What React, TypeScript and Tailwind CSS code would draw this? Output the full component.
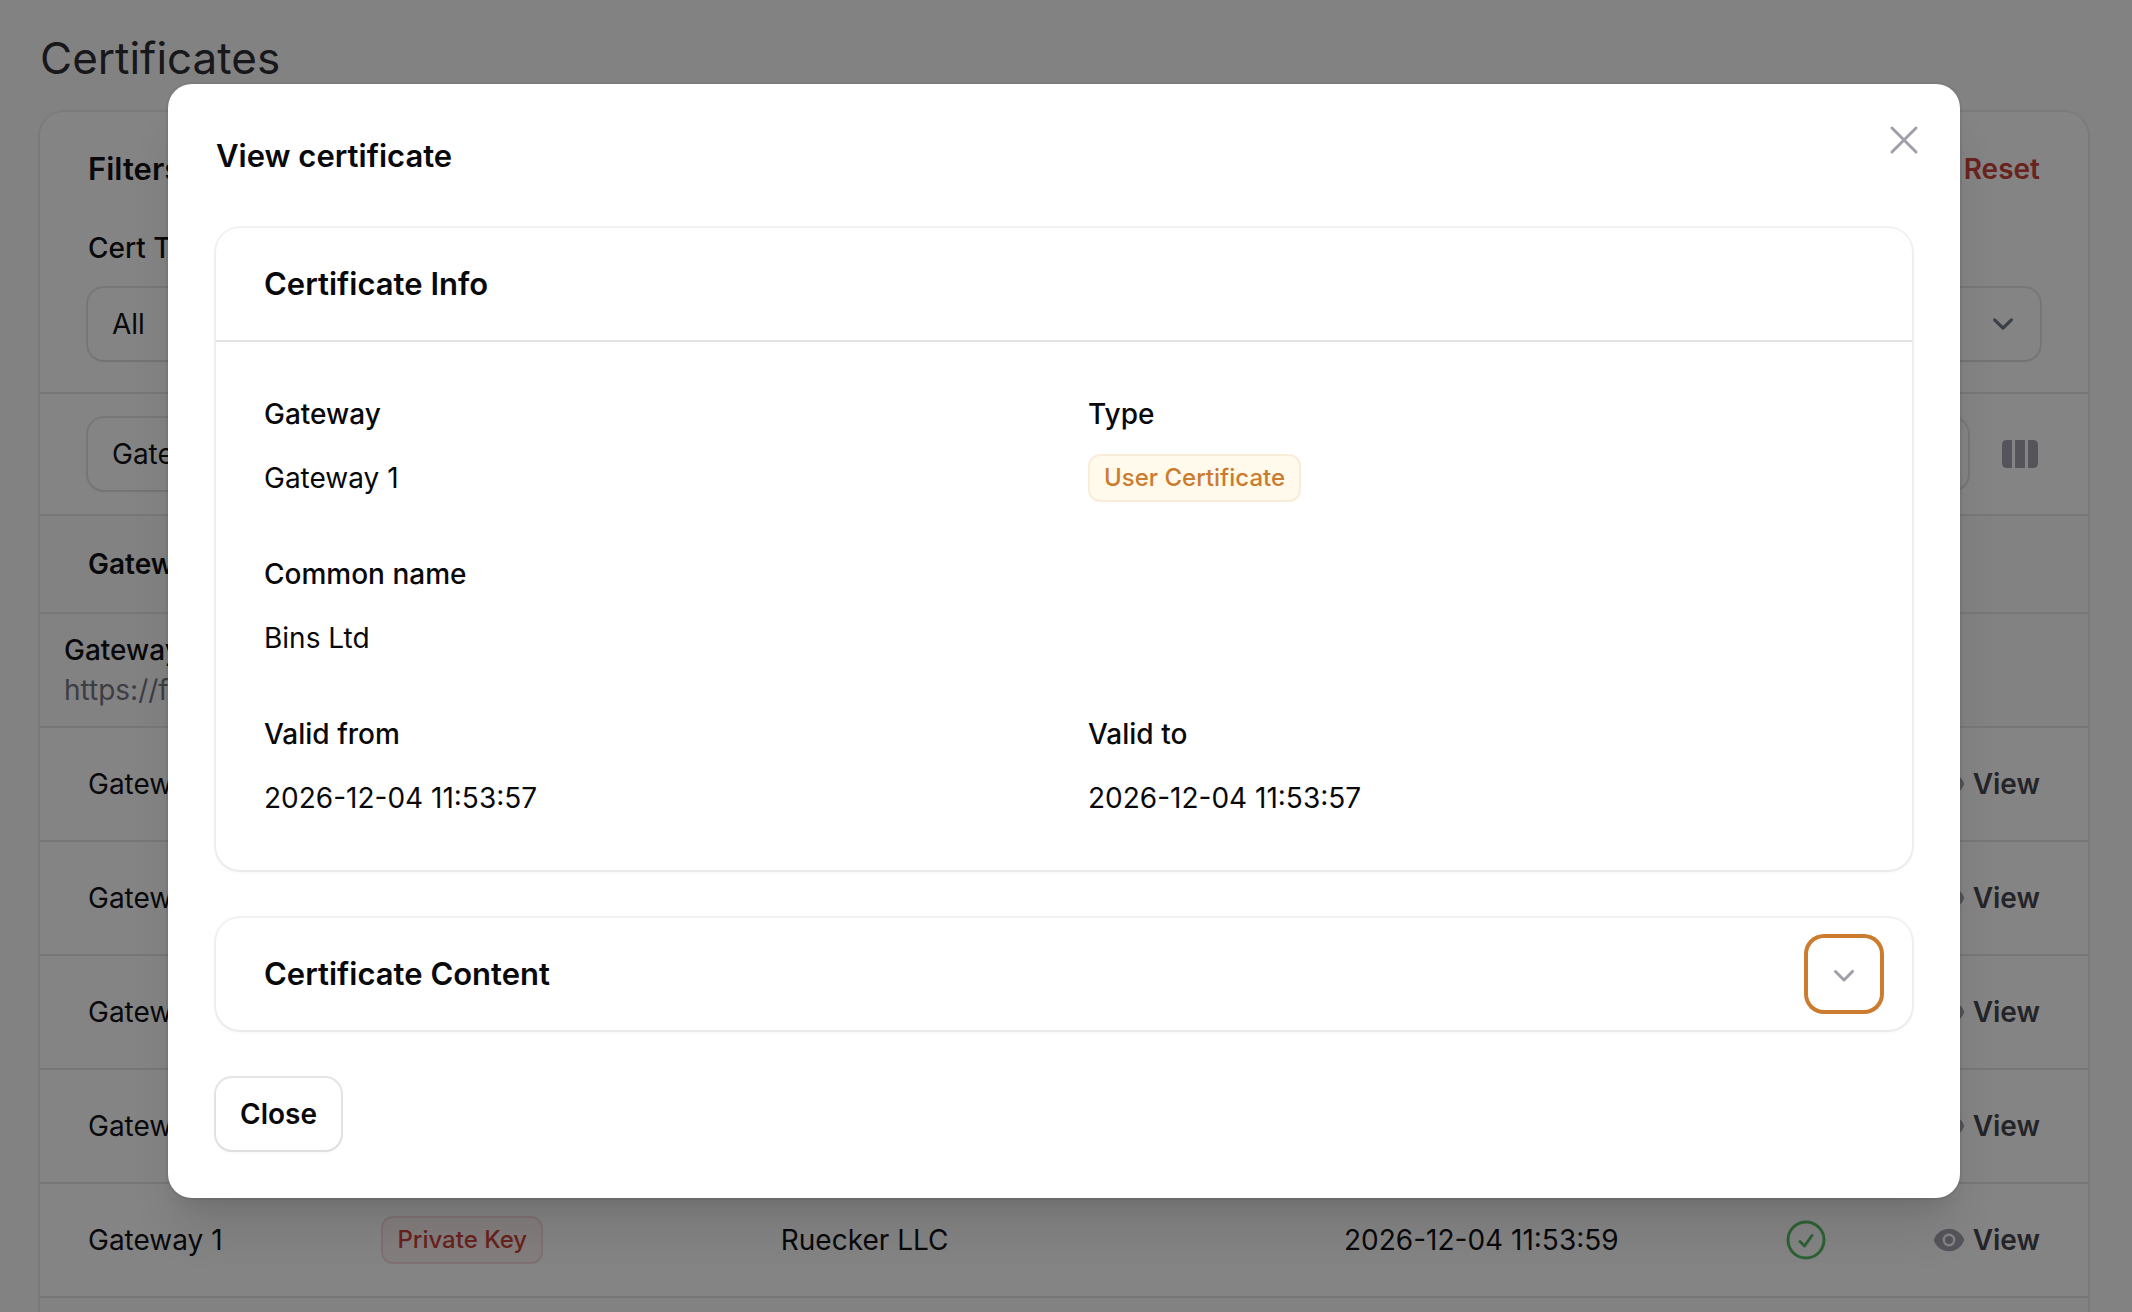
import type { ReactNode } from "react";

type Row = { type: string; name: string; validTo: string };

const rows: Row[] = [
  { type: "User Certificate", name: "Bins Ltd", validTo: "2026-12-04 11:53:57" },
  { type: "User Certificate", name: "Bins Ltd", validTo: "2026-12-04 11:53:57" },
  { type: "Private Key", name: "Ruecker LLC", validTo: "2026-12-04 11:53:59" },
  { type: "Private Key", name: "Ruecker LLC", validTo: "2026-12-04 11:53:59" },
  { type: "Private Key", name: "Ruecker LLC", validTo: "2026-12-04 11:53:59" },
];

function ChevronDown({ className }: { className: string }) {
  return (
    <svg viewBox="0 0 20 20" fill="currentColor" className={className} aria-hidden="true">
      <path
        fillRule="evenodd"
        clipRule="evenodd"
        d="M5.22 8.22a.75.75 0 0 1 1.06 0L10 11.94l3.72-3.72a.75.75 0 1 1 1.06 1.06l-4.25 4.25a.75.75 0 0 1-1.06 0L5.22 9.28a.75.75 0 0 1 0-1.06Z"
      />
    </svg>
  );
}

function SelectChevron() {
  return (
    <svg
      viewBox="0 0 20 20"
      fill="none"
      stroke="#6b7280"
      strokeWidth="1.5"
      strokeLinecap="round"
      strokeLinejoin="round"
      className="pointer-events-none absolute right-4 size-[42px]"
      aria-hidden="true"
    >
      <path d="m6 8 4 4 4-4" />
    </svg>
  );
}

function EyeIcon() {
  return (
    <svg viewBox="0 0 20 20" fill="currentColor" className="size-8 text-zinc-400" aria-hidden="true">
      <path d="M10 12.5a2.5 2.5 0 1 0 0-5 2.5 2.5 0 0 0 0 5Z" />
      <path
        fillRule="evenodd"
        clipRule="evenodd"
        d="M.664 10.59a1.651 1.651 0 0 1 0-1.186A10.004 10.004 0 0 1 10 3c4.257 0 7.893 2.66 9.336 6.41.147.381.146.804 0 1.186A10.004 10.004 0 0 1 10 17c-4.257 0-7.893-2.66-9.336-6.41ZM14 10a4 4 0 1 1-8 0 4 4 0 0 1 8 0Z"
      />
    </svg>
  );
}

function CheckCircle() {
  return (
    <svg
      viewBox="0 0 24 24"
      fill="none"
      stroke="#50ba5c"
      strokeWidth="1.5"
      strokeLinecap="round"
      strokeLinejoin="round"
      className="size-12"
      role="img"
      aria-label="Valid"
    >
      <path d="M9 12.75 11.25 15 15 9.75M21 12a9 9 0 1 1-18 0 9 9 0 0 1 18 0Z" />
    </svg>
  );
}

function Badge({ tone, children }: { tone: "amber" | "red"; children: ReactNode }) {
  const colors =
    tone === "amber"
      ? "border-[#f9ecd9] bg-[#fffaeb] text-[#cb7c2f]"
      : "border-[#f5d9d7] bg-[#fcf3ef] text-[#cb3a31]";
  return (
    <span
      className={`inline-flex h-12 items-center rounded-xl border-2 px-[14px] text-2xl font-medium ${colors}`}
    >
      {children}
    </span>
  );
}

function SelectBox({ id, value, label }: { id: string; value: string; label?: string }) {
  return (
    <div className="relative flex flex-1 items-center rounded-2xl bg-white shadow-[0_2px_4px_rgba(0,0,0,0.05)] ring-2 ring-zinc-950/10">
      <select
        id={id}
        aria-label={label}
        className="h-[72px] w-full appearance-none bg-transparent px-6 text-[28px] text-zinc-950 outline-none"
      >
        <option>{value}</option>
      </select>
      <SelectChevron />
    </div>
  );
}

function Entry({ label, children }: { label: string; children?: ReactNode }) {
  return (
    <div className="flex flex-col gap-4">
      <dt className="leading-[48px] font-medium">{label}</dt>
      <dd className="flex h-12 items-center">{children}</dd>
    </div>
  );
}

function CertificatesPage() {
  return (
    <main className="pt-6 pr-11 pl-10">
      <h1 className="text-[44px] leading-[68px] text-[#27272a]">Certificates</h1>
      <section className="mt-5 overflow-hidden rounded-3xl bg-white shadow-[0_2px_4px_rgba(0,0,0,0.05)] ring-2 ring-zinc-950/5">
        <div className="flex flex-col gap-8 border-b-2 border-zinc-200 px-12 py-8">
          <div className="flex items-center justify-between">
            <h2 className="text-[31px] leading-[50px] font-semibold">Filters</h2>
            <button type="button" className="leading-[50px] font-semibold text-[#cb3a31]">
              Reset
            </button>
          </div>
          <div className="-mt-0.5 flex flex-col gap-4">
            <label htmlFor="cert-type" className="leading-[48px] font-medium">
              Cert Type
            </label>
            <SelectBox id="cert-type" value="All" />
          </div>
        </div>
        <div className="flex items-center gap-8 border-b-2 border-zinc-200 px-12 py-6">
          <SelectBox id="group-by" value="Gateway" label="Group by" />
          <button type="button" aria-label="Toggle columns" className="text-zinc-400">
            <svg viewBox="0 0 20 20" fill="currentColor" className="size-10" aria-hidden="true">
              <path d="M14 17h2.75A2.25 2.25 0 0 0 19 14.75v-9.5A2.25 2.25 0 0 0 16.75 3H14v14ZM12.5 3h-5v14h5V3ZM3.25 3H6v14H3.25A2.25 2.25 0 0 1 1 14.75v-9.5A2.25 2.25 0 0 1 3.25 3Z" />
            </svg>
          </button>
        </div>
        <table className="w-full table-fixed border-separate border-spacing-0 text-left">
          <colgroup>
            <col className="w-[15.5%]" />
            <col className="w-[19.5%]" />
            <col className="w-[27.5%]" />
            <col className="w-[21.4%]" />
            <col className="w-[5%]" />
            <col />
          </colgroup>
          <thead>
            <tr className="h-[98px] bg-zinc-50 *:border-b-2 *:border-zinc-200">
              <th className="pr-6 pl-12 font-semibold">Gateway</th>
              <th className="px-6 font-semibold">Type</th>
              <th className="px-6 font-semibold">Common name</th>
              <th className="px-6 font-semibold">Valid to</th>
              <th className="px-6" />
              <th className="px-6" />
            </tr>
          </thead>
          <tbody>
            <tr className="h-[114px] bg-zinc-50 *:border-b-2 *:border-zinc-200">
              <th scope="rowgroup" colSpan={6} className="px-6 font-medium">
                <div>Gateway 1</div>
                <div className="font-normal text-zinc-500">https://fadel.example.com</div>
              </th>
            </tr>
            {rows.map((row, index) => (
              <tr key={index} className="h-[114px] *:border-b-2 *:border-zinc-200">
                <td className="pr-6 pl-12">Gateway 1</td>
                <td className="px-6">
                  <div className="flex">
                    <Badge tone={row.type === "Private Key" ? "red" : "amber"}>{row.type}</Badge>
                  </div>
                </td>
                <td className="px-6">{row.name}</td>
                <td className="px-6">{row.validTo}</td>
                <td className="pl-6">
                  <CheckCircle />
                </td>
                <td className="pr-12 pl-6">
                  <a href="#view" className="flex items-center justify-end gap-2 font-semibold text-zinc-700">
                    <EyeIcon />
                    View
                  </a>
                </td>
              </tr>
            ))}
            <tr className="h-[114px] bg-zinc-50">
              <td colSpan={6} />
            </tr>
          </tbody>
        </table>
      </section>
    </main>
  );
}

const cardClass =
  "rounded-3xl bg-white shadow-[0_2px_4px_rgba(0,0,0,0.05)] ring-2 ring-zinc-950/5";

function CertificateDialog() {
  return (
    <div
      role="dialog"
      aria-modal="true"
      aria-labelledby="dialog-title"
      className="relative flex w-full max-w-[1792px] flex-col gap-12 rounded-3xl bg-white p-12 shadow-[0_40px_50px_-10px_rgba(0,0,0,0.1),0_16px_20px_-12px_rgba(0,0,0,0.1)] ring-2 ring-zinc-950/5"
    >
      <button type="button" aria-label="Close dialog" className="absolute top-8 right-8 text-zinc-400">
        <svg
          viewBox="0 0 24 24"
          fill="none"
          stroke="currentColor"
          strokeWidth="1.5"
          strokeLinecap="round"
          strokeLinejoin="round"
          className="size-12"
          aria-hidden="true"
        >
          <path d="M6 18 18 6M6 6l12 12" />
        </svg>
      </button>
      <h2 id="dialog-title" className="text-[31px] leading-[48px] font-semibold">
        View certificate
      </h2>
      <section className={cardClass}>
        <h3 className="border-b-2 border-zinc-200 px-12 py-8 text-[31px] leading-[48px] font-semibold">
          Certificate Info
        </h3>
        <dl className="grid grid-cols-2 gap-12 p-12">
          <Entry label="Gateway">Gateway 1</Entry>
          <Entry label="Type">
            <Badge tone="amber">User Certificate</Badge>
          </Entry>
          <div className="col-span-2">
            <Entry label="Common name">Bins Ltd</Entry>
          </div>
          <Entry label="Valid from">2026-12-04 11:53:57</Entry>
          <Entry label="Valid to">2026-12-04 11:53:57</Entry>
        </dl>
      </section>
      <section className={`flex h-28 items-center justify-between pr-8 pl-12 ${cardClass}`}>
        <h3 className="text-[31px] leading-[48px] font-semibold">Certificate Content</h3>
        <button
          type="button"
          aria-label="Expand certificate content"
          aria-expanded="false"
          className="flex size-[72px] items-center justify-center rounded-2xl text-zinc-400 ring-4 ring-[#cb7c2f]"
        >
          <ChevronDown className="size-10" />
        </button>
      </section>
      <button
        type="button"
        className="h-[72px] self-start rounded-2xl bg-white px-6 font-semibold shadow-[0_2px_4px_rgba(0,0,0,0.05)] ring-2 ring-zinc-950/10"
      >
        Close
      </button>
    </div>
  );
}

export default function App() {
  return (
    <div className="relative h-screen overflow-hidden bg-zinc-50 font-['Inter',sans-serif] text-[28px] leading-10 text-zinc-950">
      <CertificatesPage />
      <div className="absolute inset-0 flex items-start justify-center bg-zinc-950/50 pt-[84px] pr-11 pl-10">
        <CertificateDialog />
      </div>
    </div>
  );
}
